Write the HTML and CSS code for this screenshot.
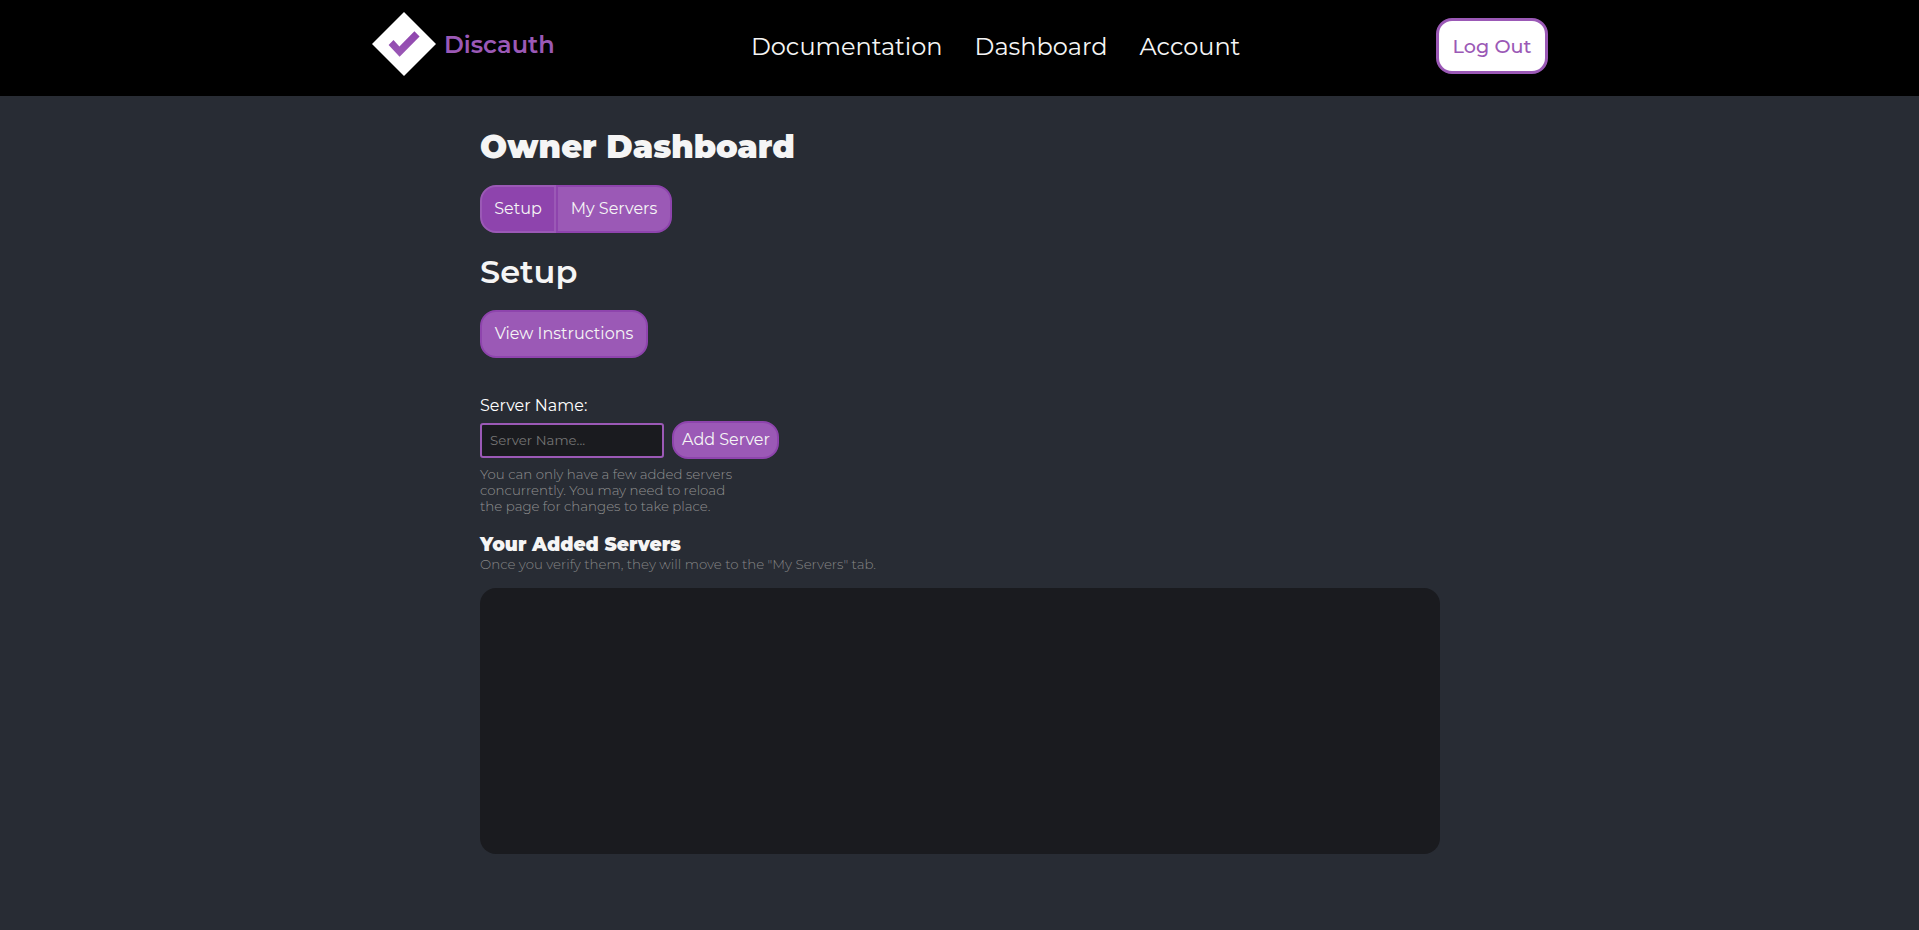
FILE: index.html
```
<!DOCTYPE html>
<html lang="en">
<head>
<meta charset="utf-8">
<title>Discauth</title>
<link rel="stylesheet" href="styles.css">
</head>
<body>
<header class="header">
  <div class="header-inner">
    <a class="brand">
      <svg class="logo" viewBox="0 0 64 64" width="64" height="64">
        <defs><linearGradient id="check" x1="0" y1="0" x2="0" y2="1"><stop offset="0" stop-color="#8e44ad"/><stop offset="1" stop-color="#9b59b6"/></linearGradient></defs>
        <path d="M32 0L64 32L32 64L0 32Z" fill="#fff"/>
        <path d="M21.5 28L16.6 32.9L27.6 44.8L47.6 24.4L42.4 19.3L27.4 34.4Z" fill="url(#check)"/>
      </svg>
      <span class="brand-name">Discauth</span>
    </a>
    <nav class="nav"><a>Documentation</a><a>Dashboard</a><a>Account</a></nav>
    <button class="logout">Log Out</button>
  </div>
</header>
<main class="content">
  <h1>Owner Dashboard</h1>
  <div class="tabs"><button class="btn tab active">Setup</button><button class="btn tab">My Servers</button></div>
  <h2>Setup</h2>
  <button class="btn instructions">View Instructions</button>
  <label class="label" for="server">Server Name:</label>
  <div class="row">
    <input class="input" id="server" type="text" placeholder="Server Name...">
    <button class="btn add">Add Server</button>
  </div>
  <p class="hint">You can only have a few added servers<br>concurrently. You may need to reload<br>the page for changes to take place.</p>
  <h3>Your Added Servers</h3>
  <p class="hint">Once you verify them, they will move to the "My Servers" tab.</p>
  <div class="servers"></div>
</main>
</body>
</html>
```
FILE: styles.css
```
* { box-sizing: border-box; }
body {
  margin: 0;
  min-height: 100vh;
  padding-left: 1px;
  background: #282c34;
  color: #f5f5f5;
  font-family: Montserrat, Inter, sans-serif;
  font-size: 16px;
}
h1, h2, h3, p { margin: 0; }
button, input { font-family: inherit; margin: 0; }
.header { height: 96px; margin-left: -1px; padding-left: 1px; background: #000; }
.header-inner {
  width: 1176px;
  height: 96px;
  margin: 0 auto;
  display: grid;
  grid-template-columns: 379px 1fr auto;
}
.brand { display: flex; padding-top: 12px; gap: 8px; color: #9b59b6; }
.brand-name { font-size: 24px; font-weight: 600; line-height: 29px; padding-top: 18px; }
.nav { display: flex; gap: 32px; font-size: 24px; line-height: 29px; padding-top: 32px; }
.logout {
  width: 112px;
  height: 56px;
  margin-top: 18px;
  padding: 0 0 1px;
  border: 3px solid #9b59b6;
  border-radius: 16px;
  background: #fff;
  color: #9b59b6;
  font-size: 19.2px;
  font-weight: 500;
}
.content { width: 960px; margin: 0 auto; padding-top: 31px; }
h1 { font-size: 32px; font-weight: 900; line-height: 39px; }
h2 { font-size: 32px; font-weight: 600; line-height: 39px; margin: 19px 0; }
h3 { font-size: 18.72px; font-weight: 900; line-height: 23px; margin-top: 19px; }
.btn {
  height: 48px;
  padding: 0 12px 2px;
  border: 2px solid #8e44ad;
  border-radius: 16px;
  background: #9b59b6;
  color: #f5f5f5;
  font-size: 16px;
  white-space: nowrap;
}
.tabs { display: flex; margin-top: 19px; }
.tab.active { width: 76px; border-radius: 16px 0 0 16px; background: #8e44ad; border-color: #9b59b6; }
.tab + .tab { width: 116px; border-radius: 0 16px 16px 0; }
.instructions { display: block; width: 168px; }
.label { display: block; margin-top: 38px; line-height: 20px; color: #fff; }
.row { display: flex; align-items: center; gap: 8px; margin-top: 5px; }
.input {
  width: 184px;
  height: 35px;
  padding: 0 8px;
  border: 2px solid #9b59b6;
  border-radius: 3px;
  background: #1a1b1f;
  color: #f5f5f5;
  font-size: 13.333px;
}
.input::placeholder { color: #757575; }
.add { width: 107px; height: 38px; padding: 0 8px 2px; }
.hint { font-size: 13.333px; font-weight: 300; line-height: 16px; color: #919191; }
.row + .hint { margin-top: 7px; }
h3 + .hint { margin-top: 0; color: #868686; }
.servers { height: 266px; margin-top: 16px; border-radius: 16px; background: #1a1b1f; }
```
